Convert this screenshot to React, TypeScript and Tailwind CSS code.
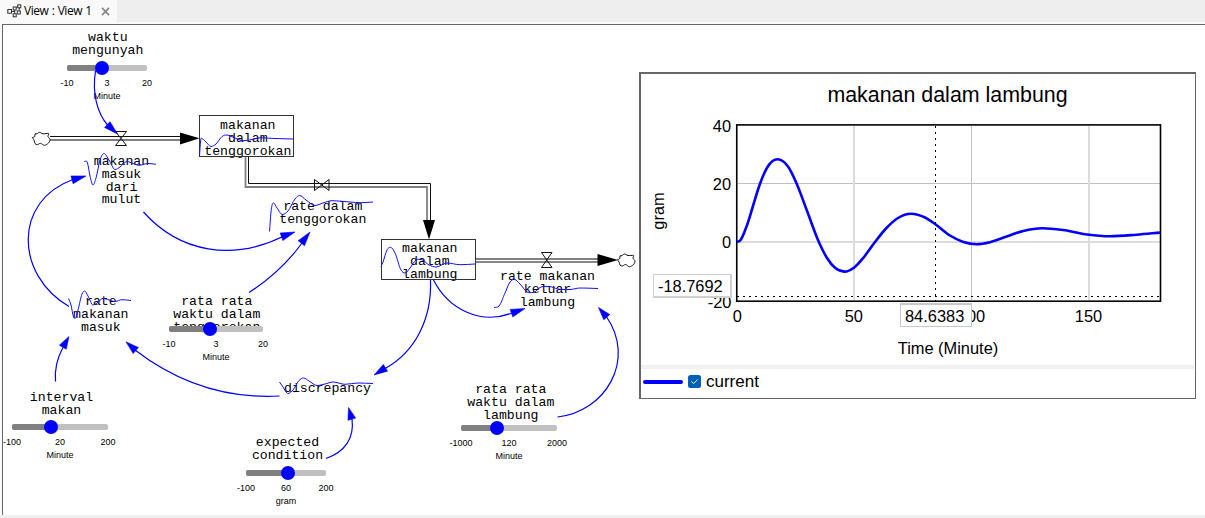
import React from "react";

type Pt = [number, number];

// The canvas starts below the tab strip; node coordinates are window based.
const CANVAS_TOP = 24;

// Closed outlines and other free shapes.
function smooth(points: Pt[], tension = 6): string {
  let d = `M${points[0][0]},${points[0][1]}`;
  for (let i = 0; i < points.length - 1; i++) {
    const p0 = points[Math.max(0, i - 1)];
    const p1 = points[i];
    const p2 = points[i + 1];
    const p3 = points[Math.min(points.length - 1, i + 2)];
    const c1 = [p1[0] + (p2[0] - p0[0]) / tension, p1[1] + (p2[1] - p0[1]) / tension];
    const c2 = [p2[0] - (p3[0] - p1[0]) / tension, p2[1] - (p3[1] - p1[1]) / tension];
    d += `C${c1[0]},${c1[1]} ${c2[0]},${c2[1]} ${p2[0]},${p2[1]}`;
  }
  return d;
}

// Time series with unevenly spaced samples: Hermite interpolation over x.
function series(points: Pt[]): string {
  const n = points.length;
  const step = (i: number) => points[i + 1][0] - points[i][0];
  const rise = (i: number) => (points[i + 1][1] - points[i][1]) / step(i);
  const slopes = points.map((_, i) => {
    if (i === 0) return rise(0);
    if (i === n - 1) return rise(n - 2);
    const before = rise(i - 1);
    const after = rise(i);
    if (before * after <= 0) return 0;
    return (before * step(i) + after * step(i - 1)) / (step(i) + step(i - 1));
  });
  let d = `M${points[0][0]},${points[0][1]}`;
  for (let i = 0; i < n - 1; i++) {
    const [x1, y1] = points[i];
    const [x2, y2] = points[i + 1];
    const h = step(i) / 3;
    d += `C${x1 + h},${y1 + slopes[i] * h} ${x2 - h},${y2 - slopes[i + 1] * h} ${x2},${y2}`;
  }
  return d;
}

const labels: { x: number; baseline: number; lines: string[] }[] = [
  { x: 107.8, baseline: 42, lines: ["waktu", "mengunyah"] },
  { x: 121.5, baseline: 166, lines: ["makanan", "masuk", "dari", "mulut"] },
  { x: 247.8, baseline: 130, lines: ["makanan", "dalam", "tenggorokan"] },
  { x: 322.8, baseline: 211, lines: ["rate dalam", "tenggorokan"] },
  { x: 429.8, baseline: 253, lines: ["makanan", "dalam", "lambung"] },
  { x: 547.5, baseline: 281, lines: ["rate makanan", "keluar", "lambung"] },
  { x: 100.8, baseline: 306, lines: ["rate", "makanan", "masuk"] },
  { x: 216.8, baseline: 306, lines: ["rata rata", "waktu dalam", "tenggorokan"] },
  { x: 61.5, baseline: 402, lines: ["interval", "makan"] },
  { x: 287.5, baseline: 447, lines: ["expected", "condition"] },
  { x: 327.5, baseline: 393, lines: ["discrepancy"] },
  { x: 510.8, baseline: 394, lines: ["rata rata", "waktu dalam", "lambung"] },
];

interface SliderData {
  x: number;
  y: number;
  width: number;
  knob: number;
  values: [string, string, string];
  unit: string;
}

const sliders: SliderData[] = [
  { x: 67, y: 68, width: 80, knob: 35, values: ["-10", "3", "20"], unit: "Minute" },
  { x: 169, y: 329, width: 94, knob: 41, values: ["-10", "3", "20"], unit: "Minute" },
  { x: 12, y: 427, width: 96, knob: 39, values: ["-100", "20", "200"], unit: "Minute" },
  { x: 246, y: 473, width: 80, knob: 42, values: ["-100", "60", "200"], unit: "gram" },
  { x: 461, y: 428, width: 96, knob: 36, values: ["-1000", "120", "2000"], unit: "Minute" },
];

const links: { d: string; tip: Pt; base: Pt }[] = [
  { d: "M95.5,71 C92,93 97,113 108,125.5", tip: [117.5, 134], base: [107.3, 124.6] },
  { d: "M69,306.5 C15,275 13,201 73,179.5", tip: [86, 176], base: [72, 179.8] },
  { d: "M143.5,212 C180,253 233,261 283,236.5", tip: [295, 232], base: [281.5, 236.8] },
  { d: "M249,292.5 Q281,272 302,243", tip: [310, 232], base: [301.3, 243.2] },
  { d: "M430.5,280 C432,319 415,352 385,368.5", tip: [374, 375], base: [385.5, 367.8] },
  { d: "M433.5,280 C449,310 481,325 512,313", tip: [525, 308.5], base: [511.5, 313.2] },
  { d: "M557.5,417 C605,412 637,360 606,316", tip: [598.5, 307.5], base: [606.8, 317.2] },
  { d: "M326,458.5 C345,452 354.5,438 352,419", tip: [348.5, 407.5], base: [351.8, 419.2] },
  { d: "M279.5,396 C225,399 178,383 135,350", tip: [126, 341.8], base: [135.8, 350.6] },
  { d: "M55.5,381.5 Q54,364 63,347.5", tip: [69, 336.5], base: [62.8, 347.2] },
];

const sparks: Pt[][] = [
  [[84, 161.5], [87.5, 163], [90, 176], [93, 185], [96, 178], [100, 160], [104, 153.5], [109, 160], [115, 169.5], [120, 167], [127, 161.5], [133, 163.5], [139, 165.3], [148, 163.5], [156, 164.3]],
  [[199.5, 156], [200.5, 142], [202.5, 139], [206, 142], [211, 146.5], [216, 144], [222, 136.5], [227, 135], [235, 138], [243, 140.7], [252, 139.5], [260, 137.8], [275, 138.5], [293, 139]],
  [[269.5, 231.5], [271, 212], [273.5, 203], [277, 208], [282.5, 214.5], [288, 211], [295, 199], [299.5, 195.5], [306, 200], [315, 205.5], [323, 203], [332, 200.7], [350, 202], [361, 202.7], [373, 202]],
  [[381, 266.5], [383, 262], [387, 250], [390.5, 247.3], [395, 253], [401, 270], [405, 273], [410, 268], [416, 260], [421, 259.5], [429, 265], [436, 267], [447, 263], [460, 264.7], [475, 264]],
  [[494, 307.5], [499, 306], [505, 293], [510, 282], [514, 279.3], [520, 284], [527, 292], [533, 292.5], [541, 287], [549, 286.5], [558, 289], [570, 289.5], [580, 288], [598, 288.5]],
  [[68.5, 298.5], [71, 305], [73.5, 317], [75.5, 318], [78, 310], [82, 294], [84.5, 291], [88, 296], [93, 305], [97, 303], [103, 298.5], [109, 300], [115, 301.5], [122, 299.7], [131, 300.5]],
  [[279.5, 382], [283, 387], [288, 393.5], [293, 390], [299, 380.5], [303.5, 378], [309, 381], [317, 385.5], [325, 384], [333, 382], [345, 384.3], [358, 383], [373, 383.5]],
];

const clouds: Pt[][] = [
  [[32.3, 137.5], [34.8, 136.5], [35, 133.8], [37, 133.8], [39.5, 132.3], [43, 133.8], [48.5, 133.5], [48, 136.5], [50, 139.5], [48.5, 143], [44.5, 145.3], [40.5, 143.3], [37.5, 144.7], [35, 143.5], [34.2, 140.5], [32.3, 137.5]],
  [[617.5, 259.7], [619.8, 258.5], [620, 255.8], [622, 255.8], [624.5, 254], [628, 255.5], [633.5, 255.5], [633, 258.3], [635, 261], [633.5, 264.5], [629.5, 266.7], [625.5, 264.5], [622.5, 266], [620, 265], [619.2, 262.2], [617.5, 259.7]],
];

const response: Pt[] = [
  [737, 242], [740.3, 240.3], [746.7, 226], [753.3, 205], [760, 183.7], [767.5, 167], [777.5, 159.3], [788, 166.5], [796.7, 183.7], [806.7, 210], [819.3, 243], [827, 258], [835, 267.8], [844.5, 271.6], [854, 267.7], [864, 257], [875, 242], [886, 228.5], [898, 218], [911, 213.7], [925, 217.5], [935.7, 224.5], [950, 235.5], [963.3, 242], [976.7, 244.2], [990, 242.2], [1006.7, 236.5], [1023.3, 230.9], [1042.3, 228.2], [1063, 230], [1087, 234.5], [1110, 236.3], [1136.7, 234.7], [1160, 232.6],
];

function arrowHead(tip: Pt, base: Pt): string {
  const dx = tip[0] - base[0];
  const dy = tip[1] - base[1];
  const len = Math.hypot(dx, dy);
  const nx = (-dy / len) * 4;
  const ny = (dx / len) * 4;
  return `${tip[0]},${tip[1]} ${base[0] + nx},${base[1] + ny} ${base[0] - nx},${base[1] - ny}`;
}

function NodeLabel({ x, baseline, lines }: { x: number; baseline: number; lines: string[] }) {
  return (
    <div
      className="absolute flex -translate-x-1/2 flex-col items-center whitespace-pre font-['Liberation_Mono','Courier_New',monospace] text-[13.2px] leading-[12.7px] text-black"
      style={{ left: x, top: baseline - 9.7 - CANVAS_TOP }}
    >
      {lines.map((line) => (
        <span key={line}>{line}</span>
      ))}
    </div>
  );
}

function Slider({ x, y, width, knob, values, unit }: SliderData) {
  return (
    <div
      className="absolute flex flex-col items-center bg-white font-['Liberation_Sans',Arial,sans-serif] text-[9px] leading-[13px] text-black"
      style={{ left: x, top: y - 3 - CANVAS_TOP, width }}
    >
      <div className="relative h-1.5 w-full rounded-[2px] bg-[#c0c0c0]">
        <div className="h-full rounded-l-[2px] bg-[#808080]" style={{ width: knob }} />
        <div
          className="absolute -top-1 size-3.5 -translate-x-1/2 rounded-full bg-[#0000ff]"
          style={{ left: knob }}
        />
      </div>
      <div className="mt-1.5 flex w-full justify-between">
        {values.map((value) => (
          <span key={value} className="flex w-0 justify-center">
            {value}
          </span>
        ))}
      </div>
      <span>{unit}</span>
    </div>
  );
}

function Diagram() {
  return (
    <svg
      className="pointer-events-none absolute left-0 top-0"
      width="638"
      height="490"
      viewBox="0 24 638 490"
      fill="none"
    >
      <g stroke="#333" strokeWidth="1">
        <rect x="199.5" y="115.5" width="94" height="41" />
        <rect x="381.5" y="239.5" width="94" height="40" />
      </g>
      <g stroke="#111" strokeWidth="1">
        <path d="M50,136.5H181" />
        <path d="M50,140H181" stroke="#808080" strokeWidth="1.8" />
        <path d="M248.5,157V183.5H430.5V221" />
        <path d="M245.5,157V187H427V221" stroke="#808080" strokeWidth="1.8" />
        <path d="M476,259H598" stroke="#808080" strokeWidth="1.8" />
        <path d="M476,262H598" />
        <path d="M115.5,131.5H126.5L115.5,145.5H126.5Z" />
        <path d="M314.5,179.5V190.5L329,179.5V190.5Z" />
        <path d="M541.5,252.5H552L541.5,267.5H552Z" />
        {clouds.map((cloud, i) => (
          <path key={i} d={smooth(cloud)} />
        ))}
      </g>
      <g fill="#000">
        <path d="M180,132.5L199.5,138.3L180,144.5Z" />
        <path d="M423,220H435L429,239.5Z" />
        <path d="M597.5,254V266L618,260Z" />
      </g>
      <g stroke="#1010ff" strokeWidth="1">
        {sparks.map((spark, i) => (
          <path key={i} d={series(spark)} />
        ))}
      </g>
      {links.map((link, i) => (
        <g key={i}>
          <path d={link.d} stroke="#0000ff" strokeWidth="1.2" />
          <polygon points={arrowHead(link.tip, link.base)} fill="#0000ff" stroke="#0000ff" strokeWidth="0.6" />
        </g>
      ))}
    </svg>
  );
}

function Plot() {
  return (
    <svg
      className="block font-['Liberation_Sans',Arial,sans-serif]"
      width="554"
      height="291"
      viewBox="641 74 554 291"
      fill="none"
    >
      <text x="947.5" y="102" textAnchor="middle" fontSize="21.4" fill="#000">
        makanan dalam lambung
      </text>
      <g strokeWidth="1" stroke="#c0c0c0">
        <path d="M738,183.5H1160M971.5,126V300" />
        <path d="M738,242H1160M854,126V300M1089,126V300" stroke="#dcdcdc" strokeWidth="2" />
      </g>
      <rect x="736.75" y="124.9" width="423.75" height="176.3" stroke="#000" strokeWidth="1.6" />
      <path d={series(response)} stroke="#0000ff" strokeWidth="2.6" />
      <path d="M935.5,126V301" stroke="#000" strokeDasharray="2 4" />
      <path d="M737,296.5H1160" stroke="#000" strokeDasharray="2 4" />
      <g fontSize="16.4" fill="#000">
        <g textAnchor="end">
          <text x="731" y="132">40</text>
          <text x="731" y="190">20</text>
          <text x="731" y="248">0</text>
          <text x="731.5" y="308">-20</text>
        </g>
        <g textAnchor="middle">
          <text x="737.3" y="322">0</text>
          <text x="853.8" y="322">50</text>
          <text x="971.5" y="322">100</text>
          <text x="1088.5" y="322">150</text>
          <text x="948" y="354">Time (Minute)</text>
          <text transform="translate(663.5 211) rotate(-90)">gram</text>
        </g>
      </g>
    </svg>
  );
}

function GraphPanel() {
  return (
    <div className="absolute left-[639px] top-[48px] flex h-[327px] w-[557px] flex-col border-b border-l-2 border-r border-t-2 border-[#666] bg-white font-['Liberation_Sans',Arial,sans-serif] text-black">
      <Plot />
      <div className="mr-px h-1 shrink-0 bg-[#f0f0f0]" />
      <div className="flex h-[25px] items-center pl-0.5">
        <span className="h-1 w-[39.5px] rounded-full bg-[#0000ff]" />
        <span className="ml-[5.5px] flex size-[13px] items-center justify-center rounded-[2.5px] bg-[#005fb8]">
          <svg width="9" height="9" viewBox="0 0 9 9" fill="none">
            <path d="M1.5,4.5L3.5,6.5L7.5,2.7" stroke="#fff" strokeWidth="1" />
          </svg>
        </span>
        <span className="ml-[5px] text-[17px] leading-5">current</span>
      </div>
      <div className="absolute left-[12px] top-[200px] flex h-6 w-[79px] items-center border border-b-2 border-r-2 border-[#d0d0d0] bg-white pl-1 text-[16.4px] leading-5">
        -18.7692
      </div>
      <div className="absolute left-[259px] top-[229px] flex h-6 w-[72px] items-center border border-t-2 border-[#c8c8c8] bg-white pl-1 text-[16.4px] leading-5">
        84.6383
      </div>
    </div>
  );
}

function ViewIcon() {
  return (
    <svg width="15" height="14" viewBox="0 0 15 14" fill="none" stroke="#333" strokeWidth="1">
      <rect x="0.8" y="5.5" width="3.7" height="3.7" />
      <rect x="6.2" y="3" width="3" height="3" />
      <rect x="10.8" y="0.8" width="3" height="3" />
      <rect x="6.2" y="9.8" width="3" height="3" />
      <rect x="10.3" y="7" width="3" height="3" />
      <path d="M4.5,7.5H7.7M7.7,6V9.8M9.2,3.5L10.8,2.6M12.2,3.8V7" />
    </svg>
  );
}

export default function App() {
  return (
    <div className="flex h-[518px] w-[1205px] flex-col overflow-hidden bg-[#fafafa]">
      <header className="flex h-[22px] shrink-0 bg-[#eeeeee]">
        <div className="flex w-[117px] items-center bg-[#f9f9f9] pl-[6.5px]">
          <ViewIcon />
          <span className="ml-[2.5px] whitespace-nowrap font-['Open_Sans','Noto_Sans',sans-serif] text-[12px] leading-4 tracking-[-0.5px] text-black [word-spacing:0.8px]">
            View : View 1
          </span>
          <svg className="ml-auto mr-[7.5px]" width="9" height="9" viewBox="0 0 9 9" stroke="#8a8a8a" strokeWidth="1.8">
            <path d="M1,0.8L8,8.2M8,0.8L1,8.2" />
          </svg>
        </div>
      </header>
      <main className="relative mt-0.5 h-[491px] shrink-0 overflow-hidden">
        <div className="ml-0.5 h-full border-l border-t border-[#666] bg-white" />
        {labels.map((label) => (
          <NodeLabel key={`${label.x}-${label.baseline}`} {...label} />
        ))}
        {sliders.map((slider) => (
          <Slider key={`${slider.x}-${slider.y}`} {...slider} />
        ))}
        <Diagram />
        <GraphPanel />
      </main>
      <footer className="grow bg-[#f0f0f0]" />
    </div>
  );
}
